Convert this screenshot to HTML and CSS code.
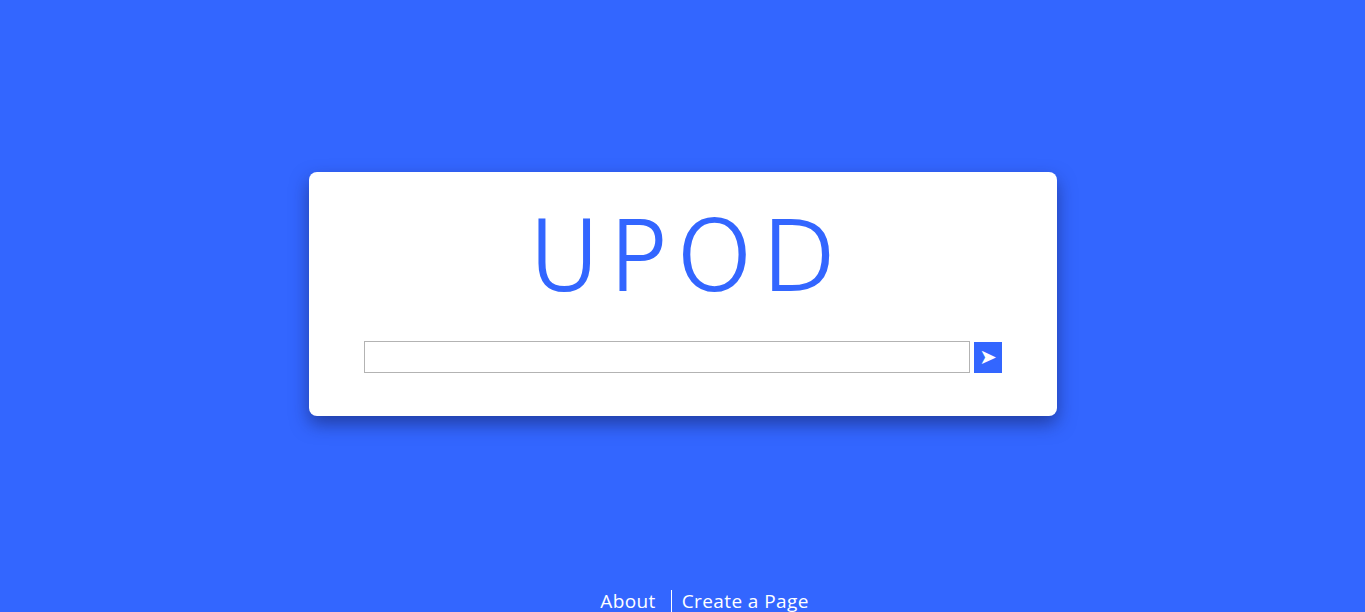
FILE: index.html
```html
<!DOCTYPE html>
<html>
<head>
<meta charset="utf-8">
<link rel="stylesheet" href="styles.css">
</head>
<body>
<div class="page">
  <main class="stage">
    <div class="card">
      <h1 class="logo">UPOD</h1>
      <form class="search">
        <input class="search-input" type="text">
        <button class="search-btn" type="button">➤</button>
      </form>
    </div>
  </main>
  <footer class="footer">
    <a class="footer-link" href="#">About</a>
    <span class="footer-sep"></span>
    <a class="footer-link" href="#">Create a Page</a>
  </footer>
</div>
</body>
</html>
```
FILE: styles.css
```css
html, body {
  margin: 0;
  padding: 0;
  height: 100%;
  overflow: hidden;
}
body {
  background: #3366ff;
  font-family: "Open Sans", "Noto Sans", sans-serif;
}
.page {
  display: flex;
  flex-direction: column;
}
.stage {
  height: 588px;
  display: flex;
  align-items: center;
  justify-content: center;
}
.card {
  width: 748px;
  height: 244px;
  box-sizing: border-box;
  background: #fff;
  border-radius: 8px;
  box-shadow: 0 8px 18px rgba(20, 30, 90, 0.55);
  display: flex;
  flex-direction: column;
  align-items: center;
}
.logo {
  margin: 20px 0 0 0;
  font-family: "DejaVu Sans", sans-serif;
  font-weight: 200;
  font-size: 97px;
  line-height: 130px;
  height: 130px;
  color: #3366ff;
  letter-spacing: 9px;
  padding-left: 9px;
  -webkit-text-stroke: 2.2px #3366ff;
}
.search {
  margin-top: 19px;
  display: flex;
  align-items: flex-start;
  gap: 4px;
}
.search-input {
  width: 606px;
  height: 32px;
  box-sizing: border-box;
  border: 1px solid #b3b3b3;
  margin: 0;
  padding: 0 6px;
  outline: none;
}
.search-btn {
  width: 28px;
  height: 31px;
  margin-top: 1px;
  border: none;
  padding: 0 0 0 1px;
  background: #3366ff;
  color: #fff;
  font-size: 21px;
  line-height: 31px;
  font-family: "DejaVu Sans", sans-serif;
}
.footer {
  display: flex;
  justify-content: center;
  align-items: center;
  padding-top: 1px;
  padding-left: 44px;
}
.footer-link {
  color: #fff;
  text-decoration: none;
  font-size: 19px;
  line-height: 24px;
  letter-spacing: 0.4px;
}
.footer-sep {
  width: 1px;
  height: 22px;
  background: #fff;
  margin: 0 10px 0 15px;
}
```
